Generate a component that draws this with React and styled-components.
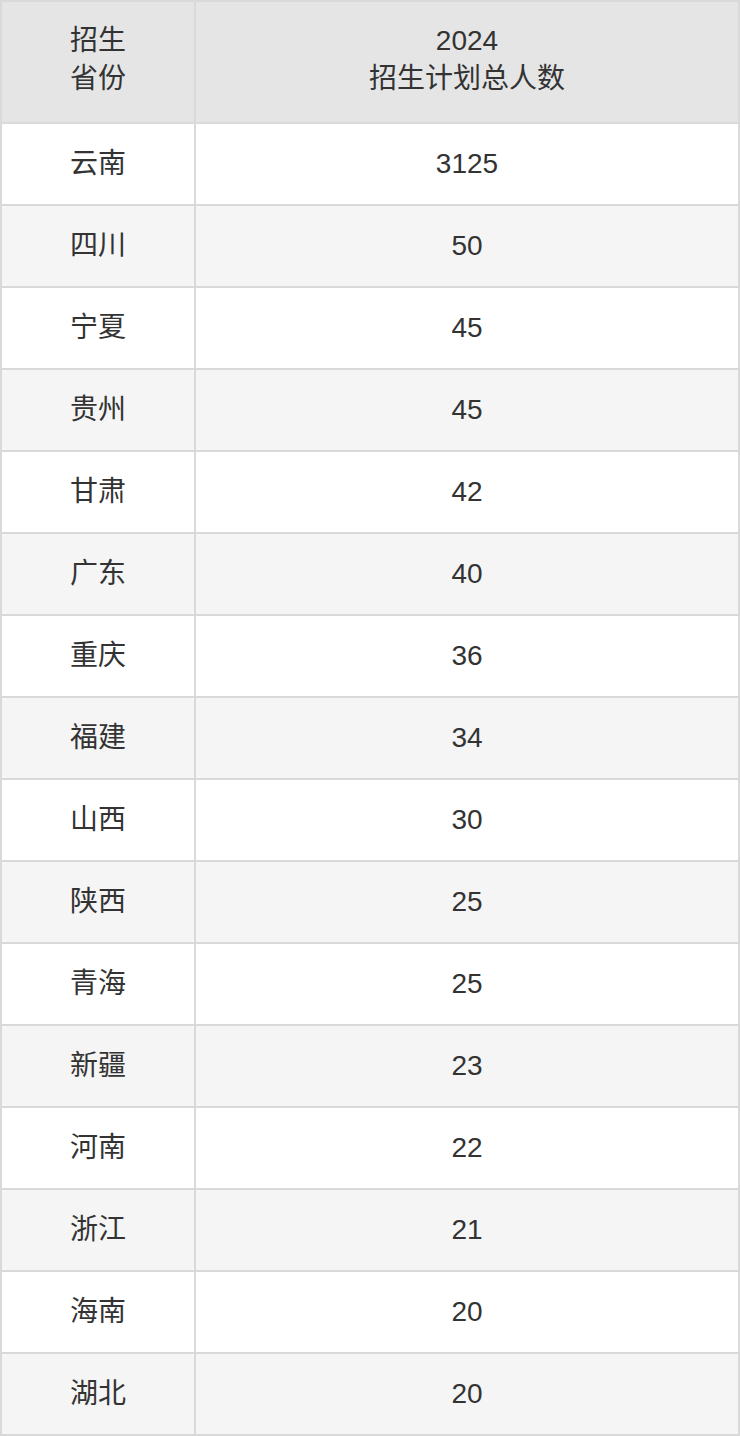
import React from 'react';
import styled, { createGlobalStyle } from 'styled-components';

const GlobalStyle = createGlobalStyle`
  html, body {
    margin: 0;
    padding: 0;
    background: #fff;
  }
`;

const rows = [
  ['云南', '3125'],
  ['四川', '50'],
  ['宁夏', '45'],
  ['贵州', '45'],
  ['甘肃', '42'],
  ['广东', '40'],
  ['重庆', '36'],
  ['福建', '34'],
  ['山西', '30'],
  ['陕西', '25'],
  ['青海', '25'],
  ['新疆', '23'],
  ['河南', '22'],
  ['浙江', '21'],
  ['海南', '20'],
  ['湖北', '20'],
];

const App = () => {
  return (
    <>
      <GlobalStyle />
      <PlanTable>
        <colgroup>
          <col style={{ width: '194px' }} />
          <col />
        </colgroup>
        <thead>
          <tr>
            <HeadCell>
              招生
              <br />
              省份
            </HeadCell>
            <HeadCell>
              2024
              <br />
              招生计划总人数
            </HeadCell>
          </tr>
        </thead>
        <tbody>
          {rows.map(([province, count], i) => (
            <BodyRow key={province + i} $striped={i % 2 === 1}>
              <BodyCell>{province}</BodyCell>
              <BodyCell>{count}</BodyCell>
            </BodyRow>
          ))}
        </tbody>
      </PlanTable>
    </>
  );
};

const PlanTable = styled.table`
  width: 740px;
  border-collapse: collapse;
  table-layout: fixed;
  border: 2px solid #d9d9d9;
  font-family: 'Liberation Sans', 'Noto Sans CJK SC', sans-serif;
  font-size: 28px;
  color: #333;
`;

const HeadCell = styled.th`
  height: 122px;
  padding: 0 0 4px;
  box-sizing: border-box;
  border: 2px solid #d9d9d9;
  background: #e5e5e5;
  font-weight: 400;
  line-height: 38px;
  text-align: center;
  vertical-align: middle;
`;

const BodyRow = styled.tr`
  background: ${(props) => (props.$striped ? '#f5f5f5' : '#fff')};
`;

const BodyCell = styled.td`
  height: 80px;
  padding: 0;
  border: 2px solid #d9d9d9;
  text-align: center;
  vertical-align: middle;
  line-height: 38px;
`;

export default App;
